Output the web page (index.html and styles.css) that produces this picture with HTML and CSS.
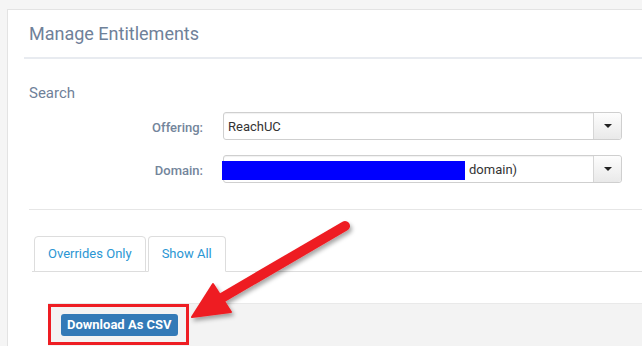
FILE: index.html
```html
<!DOCTYPE html>
<html lang="en">
<head>
    <meta charset="UTF-8">
    <meta name="viewport" content="width=device-width, initial-scale=1.0">
    <title>Manage Entitlements</title>
    <link rel="stylesheet" href="styles.css">
</head>
<body>
    <div class="page">
        <div class="card">
            <div class="card-header">
                <h1>Manage Entitlements</h1>
            </div>

            <div class="search">
                <h2>Search</h2>
                <div class="form-grid">
                    <label class="form-label">Offering:</label>
                    <div class="select">
                        <span class="select-value">ReachUC</span>
                        <span class="select-toggle"><span class="caret"></span></span>
                    </div>

                    <label class="form-label">Domain:</label>
                    <div class="select">
                        <span class="select-value"><span class="redacted"></span>domain)</span>
                        <span class="select-toggle"><span class="caret"></span></span>
                    </div>
                </div>
            </div>

            <hr class="divider">

            <ul class="tabs">
                <li class="tab">Overrides Only</li>
                <li class="tab active">Show All</li>
            </ul>

            <div class="toolbar">
                <button class="btn-csv">Download As CSV</button>
            </div>
        </div>
    </div>

    <!-- screenshot annotation -->
    <div class="highlight-box"></div>
    <svg class="arrow" width="642" height="346" viewBox="0 0 642 346">
        <defs>
            <filter id="shadow" x="-20%" y="-20%" width="140%" height="140%">
                <feDropShadow dx="2" dy="3" stdDeviation="2" flood-color="#000" flood-opacity="0.35"/>
            </filter>
        </defs>
        <g filter="url(#shadow)" fill="#ee1d23" stroke="#ee1d23">
            <line x1="345" y1="226" x2="220" y2="299" stroke-width="10" stroke-linecap="round"/>
            <polygon points="192,317 213,284 231,312" stroke-width="2" stroke-linejoin="round"/>
        </g>
    </svg>
</body>
</html>
```

FILE: styles.css
```css
body {
    margin: 0;
    height: 346px;
    overflow: hidden;
    background-color: #f5f5f5;
    font-family: Roboto, "Liberation Sans", sans-serif;
}
.page {
    padding: 9px 0 0 7px;
}
.card {
    background-color: #fff;
    border: 1px solid #e3e3e3;
    border-right: none;
    height: 420px;
}
.card-header {
    margin-left: 16px;
    padding-left: 5px;
    height: 47px;
    display: flex;
    align-items: center;
    border-bottom: 2px solid #e8ebf0;
}
.card-header h1 {
    margin: 0;
    font-size: 18px;
    font-weight: 400;
    line-height: 24px;
    color: #6f8199;
}
.search {
    padding-left: 21px;
}
.search h2 {
    margin: 24px 0 9px 0;
    font-size: 15px;
    font-weight: 400;
    line-height: 20px;
    color: #6f8199;
}
.form-grid {
    display: grid;
    grid-template-columns: 174px 399px;
    column-gap: 20px;
    row-gap: 15px;
}
.form-label {
    padding-top: 3px;
    font-size: 13px;
    font-weight: 500;
    line-height: 25px;
    text-align: right;
    color: #73859b;
}
.select {
    display: flex;
    height: 28px;
    box-sizing: border-box;
    border: 1px solid #cfcfcf;
    border-radius: 3px;
    box-shadow: inset 0 1px 1px rgba(0, 0, 0, 0.06);
}
.select-value {
    flex: 1;
    display: flex;
    align-items: center;
    padding-left: 4px;
    font-size: 13px;
    color: #333;
}
.redacted {
    display: inline-block;
    width: 243px;
    height: 19px;
    margin: 5px 4px 0 -6px;
    background-color: #0000ff;
    align-self: flex-start;
}
.select-toggle {
    width: 27px;
    display: flex;
    align-items: center;
    justify-content: center;
    border-left: 1px solid #d6d6d6;
    border-radius: 0 3px 3px 0;
    background: linear-gradient(to bottom, #fdfdfd, #e9e9e9);
}
.caret {
    width: 0;
    height: 0;
    border-left: 4px solid transparent;
    border-right: 4px solid transparent;
    border-top: 4px solid #222;
}
.divider {
    margin: 26px 0 0 21px;
    border: none;
    border-top: 1px solid #e6e6e6;
}
.tabs {
    display: flex;
    gap: 2px;
    list-style: none;
    margin: 26px 0 0 24px;
    padding: 0 0 0 2px;
    border-bottom: 1px solid #ddd;
}
.tab {
    margin-bottom: -1px;
    padding: 0 13px;
    height: 34px;
    line-height: 34px;
    font-size: 13px;
    color: #2b96d3;
    border: 1px solid #ddd;
    border-radius: 4px 4px 0 0;
    background-color: #fff;
}
.tab.active {
    border-bottom-color: #fff;
}
.toolbar {
    margin: 31px 0 0 40px;
    padding: 10px 0 10px 13px;
    background-color: #f3f3f3;
    border-top: 1px solid #e9e9e9;
    height: 60px;
}
.btn-csv {
    height: 22px;
    padding: 0 6px;
    border: none;
    border-radius: 3px;
    background-color: #337ab7;
    color: #fff;
    font-family: Roboto, "Liberation Sans", sans-serif;
    font-size: 13px;
    font-weight: 700;
    line-height: 22px;
}
.highlight-box {
    position: absolute;
    left: 48px;
    top: 304px;
    width: 141px;
    height: 41px;
    box-sizing: border-box;
    border: 3px solid #ee1d23;
}
.arrow {
    position: absolute;
    left: 0;
    top: 0;
}
```
